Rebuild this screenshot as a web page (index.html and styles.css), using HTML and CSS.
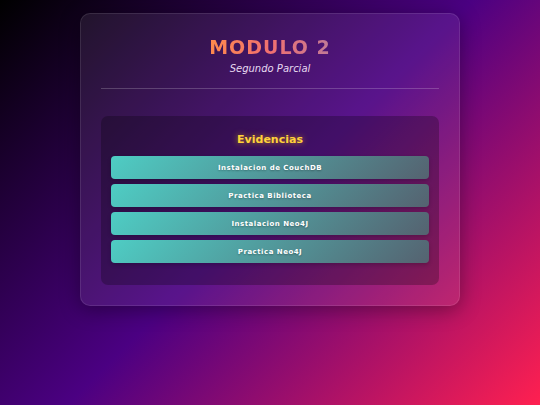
FILE: index.html
```html
<!DOCTYPE html>
<html lang="es">
<head>
<meta charset="utf-8">
<title>Modulo 2</title>
<link rel="stylesheet" href="styles.css">
</head>
<body>
<main class="card">
  <header class="head">
    <h1 class="title">MODULO 2</h1>
    <p class="subtitle">Segundo Parcial</p>
  </header>
  <hr class="divider">
  <section class="panel">
    <h2 class="panel-title">Evidencias</h2>
    <nav class="links">
      <a class="btn" href="#">Instalacion de CouchDB</a>
      <a class="btn" href="#">Practica Biblioteca</a>
      <a class="btn" href="#">Instalacion Neo4J</a>
      <a class="btn" href="#">Practica Neo4J</a>
    </nav>
  </section>
</main>
</body>
</html>
```
FILE: styles.css
```css
html, body {
  margin: 0;
  height: 100%;
}
body {
  font-family: "DejaVu Sans", sans-serif;
  background: linear-gradient(135deg, #000000 0%, #4b0082 50%, #ff2050 100%);
  background-attachment: fixed;
  padding-top: 13px;
  box-sizing: border-box;
  overflow: hidden;
}
.card {
  width: 380px;
  margin: 0 auto;
  box-sizing: border-box;
  padding: 22px 20px 20px;
  background: rgba(255, 255, 255, 0.08);
  border: 1px solid rgba(255, 255, 255, 0.1);
  border-radius: 10px;
  box-shadow: 0 4px 20px rgba(0, 0, 0, 0.35);
}
.head {
  text-align: center;
}
.title {
  margin: 0;
  font-size: 19px;
  font-weight: bold;
  letter-spacing: 1px;
  line-height: normal;
  background: linear-gradient(90deg, #ff8a4c 0%, #f07070 50%, #c07a98 100%);
  -webkit-background-clip: text;
  background-clip: text;
  color: transparent;
  display: inline-block;
}
.subtitle {
  margin: 5px 0 0;
  font-size: 10px;
  font-style: italic;
  color: #e6d8f0;
}
.divider {
  margin: 14px 0 27px;
  border: 0;
  height: 1px;
  background: rgba(255, 255, 255, 0.2);
}
.panel {
  background: rgba(0, 0, 0, 0.25);
  border-radius: 7px;
  padding: 17px 10px 22px;
}
.panel-title {
  margin: 0 0 10px;
  text-align: center;
  font-size: 11px;
  font-weight: bold;
  color: #ffd23a;
  text-shadow: 0 0 6px rgba(255, 200, 0, 0.6);
}
.links {
  display: flex;
  flex-direction: column;
  gap: 5px;
}
.btn {
  display: flex;
  align-items: center;
  justify-content: center;
  height: 23px;
  border-radius: 4px;
  background: linear-gradient(135deg, #4ecdc4 0%, #556270 100%);
  color: #ffffff;
  font-size: 7px;
  font-weight: bold;
  letter-spacing: 0.5px;
  text-decoration: none;
  text-shadow: 0 1px 2px rgba(0, 0, 0, 0.3);
  box-shadow: 0 2px 4px rgba(0, 0, 0, 0.2);
}
```
